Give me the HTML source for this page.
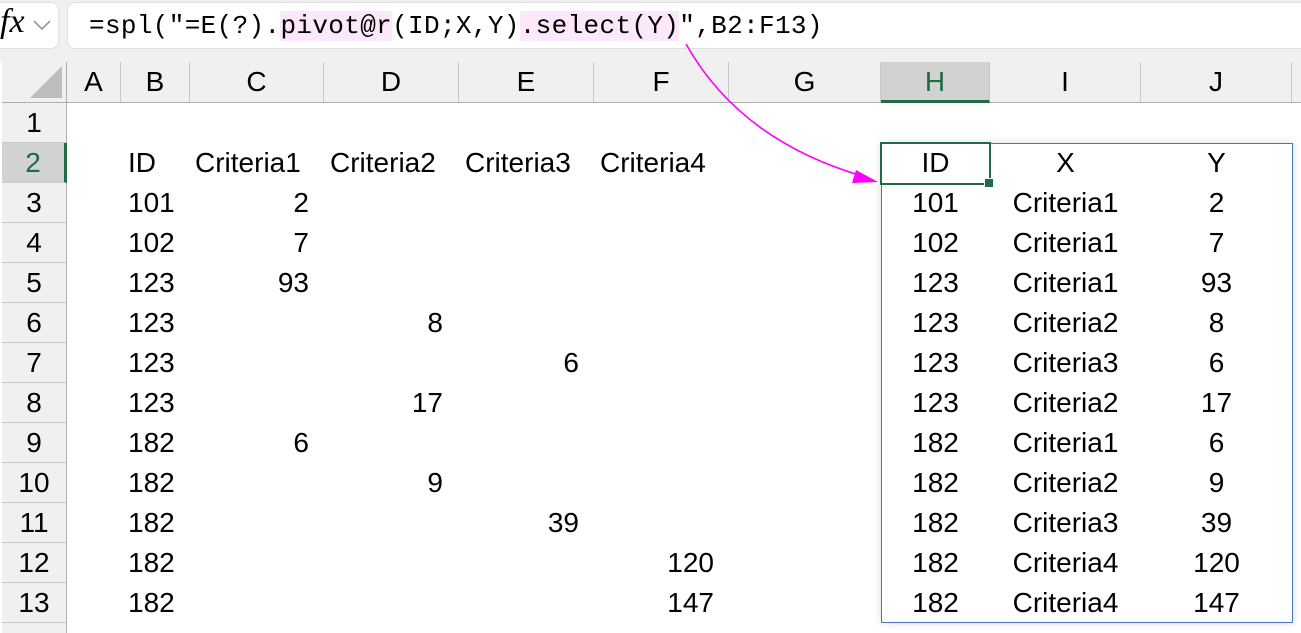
<!DOCTYPE html>
<html><head><meta charset="utf-8"><style>
html,body{margin:0;width:1301px;height:633px;overflow:hidden}
body{background:#fff;font-family:"Liberation Sans",sans-serif;position:relative}
.a{position:absolute}
.t{position:absolute;font-size:28px;line-height:40px;color:#000;white-space:nowrap}
.ch{position:absolute;top:62px;height:41px;background:#f0f0f0;border-right:1px solid #c8c8c8;border-bottom:1px solid #b0b0b0;box-sizing:border-box;font-size:28px;line-height:40px;text-align:center}
.rh{position:absolute;left:2px;width:65px;height:40px;background:#f0f0f0;border-bottom:1px solid #c8c8c8;border-right:1px solid #b0b0b0;box-sizing:border-box;font-size:28px;line-height:40px;text-align:center}
.r{text-align:right}.c{text-align:center}
.hl{background:#fde8fb}
</style></head><body>
<div class="a" style="left:0;top:0;width:1301px;height:62px;background:#f0f0f0"></div>
<div class="a" style="left:-10px;top:2px;width:67px;height:45px;background:#fff;border-radius:8px;border:1px solid #e0e0e0"></div>
<div class="a" style="left:0;top:3px;font:italic 34px 'Liberation Serif',serif">fx</div>
<svg class="a" style="left:32px;top:18px" width="22" height="14"><path d="M2 3 L10 11 L18 3" fill="none" stroke="#999" stroke-width="1.6"/></svg>
<div class="a" style="left:67px;top:2px;width:1250px;height:45px;background:#fff;border-radius:8px;border:1px solid #e0e0e0"></div>
<div class="a" style="left:89px;top:8px;font:26px 'Liberation Mono',monospace;letter-spacing:0.35px;line-height:36px;white-space:pre">=spl("=E(?).<span class="hl">pivot@r</span>(ID;X,Y)<span class="hl">.select(Y)</span>",B2:F13)</div>
<div class="a" style="left:2px;top:62px;width:65px;height:41px;background:#f0f0f0;border-right:1px solid #b0b0b0;border-bottom:1px solid #b0b0b0;box-sizing:border-box"></div>
<svg class="a" style="left:28px;top:64px" width="36" height="36"><polygon points="34,2 34,34 2,34" fill="#bdbdbd"/></svg>
<div class="ch" style="left:67px;width:54px">A</div>
<div class="ch" style="left:121px;width:69px">B</div>
<div class="ch" style="left:190px;width:134px">C</div>
<div class="ch" style="left:324px;width:135px">D</div>
<div class="ch" style="left:459px;width:135px">E</div>
<div class="ch" style="left:594px;width:135px">F</div>
<div class="ch" style="left:729px;width:152px">G</div>
<div class="ch" style="left:881px;width:109px;background:#d2d2d2;color:#1e6b41;border-bottom:3px solid #1e6b41">H</div>
<div class="ch" style="left:990px;width:151px">I</div>
<div class="ch" style="left:1141px;width:151px">J</div>
<div class="ch" style="left:1292px;width:20px"></div>
<div class="rh" style="top:103px">1</div>
<div class="rh" style="top:143px;background:#d2d2d2;color:#1e6b41;border-right:3px solid #1e6b41">2</div>
<div class="rh" style="top:183px">3</div><div class="rh" style="top:223px">4</div><div class="rh" style="top:263px">5</div><div class="rh" style="top:303px">6</div><div class="rh" style="top:343px">7</div><div class="rh" style="top:383px">8</div><div class="rh" style="top:423px">9</div><div class="rh" style="top:463px">10</div><div class="rh" style="top:503px">11</div><div class="rh" style="top:543px">12</div><div class="rh" style="top:583px">13</div><div class="rh" style="top:623px">14</div>

<div class="t" style="left:128px;top:143px">ID</div>
<div class="t" style="left:195px;top:143px">Criteria1</div>
<div class="t" style="left:330px;top:143px">Criteria2</div>
<div class="t" style="left:465px;top:143px">Criteria3</div>
<div class="t" style="left:600px;top:143px">Criteria4</div>
<div class="t" style="left:128px;top:183px">101</div><div class="t" style="left:128px;top:223px">102</div><div class="t" style="left:128px;top:263px">123</div><div class="t" style="left:128px;top:303px">123</div><div class="t" style="left:128px;top:343px">123</div><div class="t" style="left:128px;top:383px">123</div><div class="t" style="left:128px;top:423px">182</div><div class="t" style="left:128px;top:463px">182</div><div class="t" style="left:128px;top:503px">182</div><div class="t" style="left:128px;top:543px">182</div><div class="t" style="left:128px;top:583px">182</div>
<div class="t r" style="right:992px;top:183px">2</div>
<div class="t r" style="right:992px;top:223px">7</div>
<div class="t r" style="right:992px;top:263px">93</div>
<div class="t r" style="right:858px;top:303px">8</div>
<div class="t r" style="right:722px;top:343px">6</div>
<div class="t r" style="right:858px;top:383px">17</div>
<div class="t r" style="right:992px;top:423px">6</div>
<div class="t r" style="right:858px;top:463px">9</div>
<div class="t r" style="right:722px;top:503px">39</div>
<div class="t r" style="right:587px;top:543px">120</div>
<div class="t r" style="right:587px;top:583px">147</div>

<div class="a" style="left:881px;top:143px;width:410px;height:478px;border:1px solid #4a72b8;box-shadow:0 0 8px rgba(0,0,0,.15);background:#fff"></div>
<div class="a" style="left:880px;top:142px;width:107px;height:39px;border:2px solid #1e6b41"></div>
<div class="a" style="left:984px;top:178px;width:8px;height:8px;background:#1e6b41;border:1px solid #fff"></div>

<div class="a" style="left:881px;top:143px;width:109px">
<div class="t c" style="position:static">ID</div><div class="t c" style="position:static">101</div><div class="t c" style="position:static">102</div><div class="t c" style="position:static">123</div><div class="t c" style="position:static">123</div><div class="t c" style="position:static">123</div><div class="t c" style="position:static">123</div><div class="t c" style="position:static">182</div><div class="t c" style="position:static">182</div><div class="t c" style="position:static">182</div><div class="t c" style="position:static">182</div><div class="t c" style="position:static">182</div></div>
<div class="a" style="left:990px;top:143px;width:151px">
<div class="t c" style="position:static">X</div><div class="t c" style="position:static">Criteria1</div><div class="t c" style="position:static">Criteria1</div><div class="t c" style="position:static">Criteria1</div><div class="t c" style="position:static">Criteria2</div><div class="t c" style="position:static">Criteria3</div><div class="t c" style="position:static">Criteria2</div><div class="t c" style="position:static">Criteria1</div><div class="t c" style="position:static">Criteria2</div><div class="t c" style="position:static">Criteria3</div><div class="t c" style="position:static">Criteria4</div><div class="t c" style="position:static">Criteria4</div></div>
<div class="a" style="left:1141px;top:143px;width:151px">
<div class="t c" style="position:static">Y</div><div class="t c" style="position:static">2</div><div class="t c" style="position:static">7</div><div class="t c" style="position:static">93</div><div class="t c" style="position:static">8</div><div class="t c" style="position:static">6</div><div class="t c" style="position:static">17</div><div class="t c" style="position:static">6</div><div class="t c" style="position:static">9</div><div class="t c" style="position:static">39</div><div class="t c" style="position:static">120</div><div class="t c" style="position:static">147</div></div>

<svg class="a" style="left:0;top:0" width="1301" height="633">
<path d="M686 44 Q740 140 862 176" fill="none" stroke="#ff00ff" stroke-width="1.6"/>
<polygon points="878,182 856,170 852,183" fill="#ff00ff"/>
</svg>
</body></html>
